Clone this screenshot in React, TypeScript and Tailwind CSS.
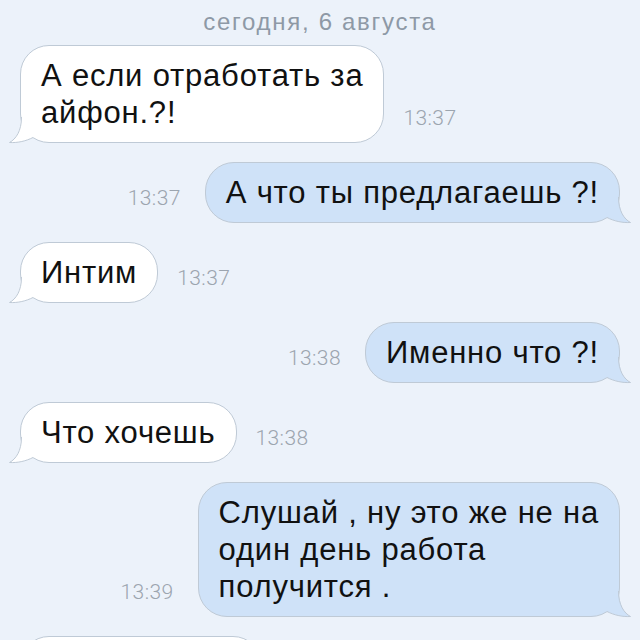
import React from "react";

type Msg = { side: "in" | "out"; text: string[]; time: string };

const messages: Msg[] = [
  { side: "in", text: ["А если отработать за", "айфон.?!"], time: "13:37" },
  { side: "out", text: ["А что ты предлагаешь ?!"], time: "13:37" },
  { side: "in", text: ["Интим"], time: "13:37" },
  { side: "out", text: ["Именно что ?!"], time: "13:38" },
  { side: "in", text: ["Что хочешь"], time: "13:38" },
  { side: "out", text: ["Слушай , ну это же не на", "один день работа", "получится ."], time: "13:39" },
];

// хвостик пузыря (для исходящих — зеркально)
function Tail({ side }: { side: "in" | "out" }) {
  const fill = side === "in" ? "#ffffff" : "#cfe2f8";
  return (
    <svg
      width="26"
      height="26"
      viewBox="0 0 26 26"
      className={
        side === "in"
          ? "absolute left-[-12px] bottom-[-1px] overflow-visible"
          : "absolute right-[-12px] bottom-[-1px] overflow-visible -scale-x-100"
      }
    >
      <path d="M12 0 C12 14 7 22 0 26 C9 26 17 24 24 20.5 L24.5 12 L14 0 Z" fill={fill} />
      <path
        d="M12.5 0 C12.5 14 7 22 0.5 25.5 C9 26 17 24 24 20.5"
        fill="none"
        stroke="#bfcad6"
        strokeWidth="1"
      />
    </svg>
  );
}

function Bubble({ m }: { m: Msg }) {
  const time = (
    <span
      className="text-[21px] leading-[24px] font-light tracking-[0.4px] text-[#9ca5af] mb-[13px] shrink-0"
      style={{ fontFamily: "Roboto, 'Liberation Sans', sans-serif" }}
    >
      {m.time}
    </span>
  );
  const bubble = (
    <div
      className={
        m.side === "in"
          ? "relative bg-white border border-[#bfcad6] rounded-[29px] px-[20px] py-[11px]"
          : "relative bg-[#cfe2f8] border border-[#bfcad6] rounded-[29px] px-[20px] py-[11px]"
      }
    >
      {m.text.map((line, i) => (
        <div key={i} className="text-[31px] leading-[37px] tracking-[0.8px] text-[#111111] whitespace-nowrap">
          {line}
        </div>
      ))}
      <Tail side={m.side} />
    </div>
  );
  return m.side === "in" ? (
    <div className="flex items-end gap-[19px] pl-[20px]">
      {bubble}
      {time}
    </div>
  ) : (
    <div className="flex items-end justify-end gap-[24px] pr-[20px]">
      {time}
      {bubble}
    </div>
  );
}

export default function App() {
  return (
    <div
      className="w-[640px] h-[640px] overflow-hidden bg-[#ecf2fa] pt-[6px]"
      style={{ fontFamily: "'Liberation Sans', Roboto, sans-serif" }}
    >
      <div className="text-center text-[24px] tracking-[1.7px] text-[#8e99a6] leading-[32px] mb-[7px]">
        сегодня, 6 августа
      </div>
      <div className="flex flex-col gap-[19px]">
        {messages.map((m, i) => (
          <Bubble key={i} m={m} />
        ))}
        <div className="pl-[20px]">
          <div className="w-[242px] h-[60px] bg-white border border-[#bfcad6] rounded-[29px]" />
        </div>
      </div>
    </div>
  );
}
